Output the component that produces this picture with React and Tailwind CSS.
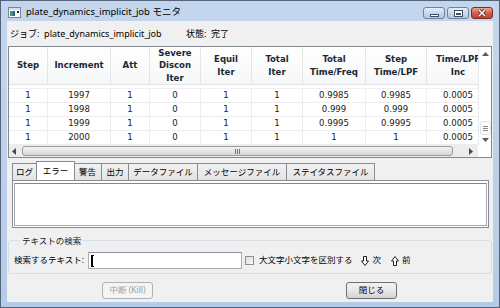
import React from "react";

const jp = "font-['Noto_Sans','Noto_Sans_CJK_JP',sans-serif]";
const tb = "font-['DejaVu_Sans_Condensed','Liberation_Sans',sans-serif]";

const cols = [
  { w: "w-[39px]", h: ["Step"], v: ["1", "1", "1", "1"] },
  { w: "w-[63px]", h: ["Increment"], v: ["1997", "1998", "1999", "2000"] },
  { w: "w-[39px]", h: ["Att"], v: ["1", "1", "1", "1"] },
  { w: "w-[51px]", h: ["Severe", "Discon", "Iter"], v: ["0", "0", "0", "0"] },
  { w: "w-[51px]", h: ["Equil", "Iter"], v: ["1", "1", "1", "1"] },
  { w: "w-[51px]", h: ["Total", "Iter"], v: ["1", "1", "1", "1"] },
  { w: "w-[63px]", h: ["Total", "Time/Freq"], v: ["0.9985", "0.999", "0.9995", "1"] },
  { w: "w-[61px]", h: ["Step", "Time/LPF"], v: ["0.9985", "0.999", "0.9995", "1"] },
  { w: "w-[63px]", h: ["Time/LPF", "Inc"], v: ["0.0005", "0.0005", "0.0005", "0.0005"] },
];

const tabs = [
  { t: "ログ", w: "w-[25px]" },
  { t: "エラー", w: "w-[39px]", sel: true },
  { t: "警告", w: "w-[28px]" },
  { t: "出力", w: "w-[27px]" },
  { t: "データファイル", w: "w-[69px]" },
  { t: "メッセージファイル", w: "w-[89px]" },
  { t: "ステイタスファイル", w: "w-[88px]" },
];

function TitleIcon() {
  return (
    <svg width="13" height="11" viewBox="0 0 13 11">
      <rect x="0.5" y="0.5" width="12" height="10" fill="#ffffff" stroke="#7b8797" />
      <rect x="1" y="1" width="11" height="2" fill="#d3deec" />
      <rect x="2" y="4" width="3" height="5" fill="#3c9c6e" />
      <rect x="5" y="4" width="2" height="5" fill="#2f5fa6" />
      <rect x="9" y="4" width="2" height="2" fill="#333" />
    </svg>
  );
}

function CapBtn({ children, red }) {
  return (
    <div
      className={
        red
          ? "w-[22px] h-[12px] rounded-[3px] border border-[#7b2c22] bg-gradient-to-b from-[#e9a596] via-[#d0614f] to-[#c4402f] flex items-center justify-center"
          : "w-[22px] h-[12px] rounded-[3px] border border-[#6f819b] bg-gradient-to-b from-[#e6eef8] via-[#c9d8ec] to-[#b3c7e2] flex items-center justify-center"
      }
    >
      {children}
    </div>
  );
}

export default function App() {
  return (
    <div className="w-[500px] h-[308px] bg-gradient-to-b from-[#c3d6ee] to-[#b5cce8] border border-[#52637a] flex flex-col px-[6px] pb-[5px] overflow-hidden">
      {/* title bar */}
      <div className="h-[20px] flex items-start shrink-0">
        <div className="mt-[6px] ml-[1px]">
          <TitleIcon />
        </div>
        <div className={`${jp} text-[9.5px] leading-[12px] text-black ml-[5px] mt-[5px]`}>
          plate_dynamics_implicit_job モニタ
        </div>
        <div className="ml-auto mt-[6px] mr-[0px] flex gap-[2px]">
          <CapBtn>
            <div className="w-[9px] h-[3px] bg-white border border-[#3d4d66] mt-[4px]" />
          </CapBtn>
          <CapBtn>
            <div className="w-[9px] h-[7px] border border-[#3d4d66] bg-white flex items-center justify-center">
              <div className="w-[5px] h-[2px] bg-[#3d4d66] mt-[1px]" />
            </div>
          </CapBtn>
          <CapBtn red>
            <svg width="10" height="8" viewBox="0 0 10 8">
              <path d="M2 1 L8 7 M8 1 L2 7" stroke="#5a1a12" strokeWidth="3" />
              <path d="M2 1 L8 7 M8 1 L2 7" stroke="#ffffff" strokeWidth="1.6" />
            </svg>
          </CapBtn>
        </div>
      </div>

      {/* client */}
      <div className="flex-1 bg-[#f0f0f0] flex flex-col">
        {/* job line */}
        <div className={`${jp} h-[25px] flex items-center pl-[3px] text-[9px] text-black shrink-0`}>
          <span className="w-[176px]">ジョブ:&nbsp; plate_dynamics_implicit_job</span>
          <span>状態:&nbsp; 完了</span>
        </div>

        {/* table */}
        <div className={`${tb} ml-[1px] w-[484px] h-[112px] border border-[#828790] bg-white flex flex-col shrink-0`}>
          <div className="flex h-[98px]">
            <div className="w-[469px] overflow-hidden flex flex-col">
              <div className="flex h-[38px] bg-gradient-to-b from-white to-[#f6f7f8] border-b border-[#e2e3e5] shrink-0">
                {cols.map((c, i) => (
                  <div
                    key={i}
                    className={`${c.w} shrink-0 flex flex-col items-center justify-center border-r border-[#e5e5e5] text-[9.5px] leading-[12.5px] font-bold text-[#1d2735]`}
                  >
                    {c.h.map((l, j) => (
                      <span key={j} className="whitespace-nowrap">{l}</span>
                    ))}
                  </div>
                ))}
              </div>
              <div className="h-[4px] border-b border-[#efefef] shrink-0" />
              {[0, 1, 2, 3].map((r) => (
                <div key={r} className="flex h-[14px] border-b border-[#ededed] shrink-0">
                  {cols.map((c, i) => (
                    <div
                      key={i}
                      className={`${c.w} shrink-0 flex items-center justify-center border-r border-[#ededed] text-[9.5px] text-[#202020]`}
                    >
                      {c.v[r]}
                    </div>
                  ))}
                </div>
              ))}
            </div>
            {/* vertical scrollbar */}
            <div className="w-[13px] border-l border-[#eaeaea] bg-white flex flex-col items-center text-[#5a5a5a]">
              <svg width="7" height="4" viewBox="0 0 7 4" className="mt-[5px]">
                <path d="M0 4 L3.5 0 L7 4 Z" fill="#5a5a5a" />
              </svg>
              <div className="flex-1" />
              <div className="w-[11px] h-[14px] rounded-[2px] border border-[#e3e3e3] bg-[#fbfbfb] flex flex-col items-center justify-center gap-[1px]">
                <div className="w-[5px] h-[1px] bg-[#8a8a8a]" />
                <div className="w-[5px] h-[1px] bg-[#8a8a8a]" />
                <div className="w-[5px] h-[1px] bg-[#8a8a8a]" />
              </div>
              <svg width="7" height="4" viewBox="0 0 7 4" className="mt-[3px] mb-[3px]">
                <path d="M0 0 L3.5 4 L7 0 Z" fill="#5a5a5a" />
              </svg>
            </div>
          </div>
          {/* horizontal scrollbar */}
          <div className="flex h-[12px]">
            <div className="w-[469px] bg-[#ececec] flex items-center px-[3px]">
              <svg width="4" height="7" viewBox="0 0 4 7">
                <path d="M4 0 L0 3.5 L4 7 Z" fill="#4a4a4a" />
              </svg>
              <div className="ml-[6px] w-[431px] h-[10px] rounded-[3px] border border-[#9b9b9b] bg-gradient-to-b from-[#f3f3f3] to-[#d6d6d6] flex items-center justify-center gap-[1px]">
                <div className="w-[1px] h-[5px] bg-[#777]" />
                <div className="w-[1px] h-[5px] bg-[#777]" />
                <div className="w-[1px] h-[5px] bg-[#777]" />
              </div>
              <div className="flex-1" />
              <svg width="4" height="7" viewBox="0 0 4 7" className="mr-[2px]">
                <path d="M0 0 L4 3.5 L0 7 Z" fill="#4a4a4a" />
              </svg>
            </div>
            <div className="flex-1 bg-white" />
          </div>
        </div>

        {/* tabs */}
        <div className={`${jp} ml-[5px] mt-[3px] h-[19px] flex items-end shrink-0 text-[8.5px]`}>
          {tabs.map((t, i) =>
            t.sel ? (
              <div
                key={i}
                className={`${t.w} h-[19px] -mx-[1px] relative z-10 bg-white border border-b-0 border-[#898c95] flex items-center justify-center text-black`}
              >
                {t.t}
              </div>
            ) : (
              <div
                key={i}
                className={`${t.w} h-[17px] bg-gradient-to-b from-[#f2f2f2] to-[#e3e3e3] border border-[#898c95] border-b-0 ${i > 0 ? "border-l-0" : ""} flex items-center justify-center text-black`}
              >
                {t.t}
              </div>
            )
          )}
        </div>
        <div className="ml-[5px] w-[477px] h-[48px] border border-[#898c95] bg-white p-[1px] pt-[2px] shrink-0 -mt-[0px]">
          <div className="w-full h-full border border-[#a3a6ad] border-t-[#82858c] bg-white" />
        </div>

        {/* search group */}
        <fieldset className={`${jp} ml-[1px] mt-[6px] w-[484px] border border-[#d5dfe5] rounded-[3px] pl-[5px] pt-[5px] pb-[4px] shrink-0`}>
          <legend className="ml-[6px] px-[2px] text-[8.5px] leading-[13px] text-[#1a1a1a]">テキストの検索</legend>
          <div className="flex items-center h-[17px] text-[8.5px] text-black">
            <span className="w-[74px]">検索するテキスト:</span>
            <div className="w-[154px] h-[17px] border border-[#abadb3] border-t-[#8e9198] bg-white flex items-center pl-[2px]">
              <div className="w-[3px] h-[12px] border-l-[2px] border-y border-black" />
            </div>
            <div className="ml-[3px] w-[9px] h-[9px] border border-[#8f8f8f] bg-gradient-to-br from-[#dcdcdc] to-[#fafafa]" />
            <span className="ml-[5px]">大文字小文字を区別する</span>
            <svg width="8" height="10" viewBox="0 0 8 10" className="ml-[8px]">
              <path d="M2.5 0.5 H5.5 V5 H7.5 L4 9.5 L0.5 5 H2.5 Z" fill="#ffffff" stroke="#202020" strokeWidth="1" />
            </svg>
            <span className="ml-[4px]">次</span>
            <svg width="8" height="10" viewBox="0 0 8 10" className="ml-[10px]">
              <path d="M2.5 9.5 H5.5 V5 H7.5 L4 0.5 L0.5 5 H2.5 Z" fill="#ffffff" stroke="#202020" strokeWidth="1" />
            </svg>
            <span className="ml-[3px]">前</span>
          </div>
        </fieldset>

        {/* buttons */}
        <div className={`${jp} flex mt-[8px] h-[17px] text-[8.5px] shrink-0`}>
          <div className="ml-[95px] w-[51px] h-[17px] rounded-[3px] border border-[#adb2b5] bg-[#f4f4f4] flex items-center justify-center text-[#a0a0a0]">
            中断 (Kill)
          </div>
          <div className="ml-[193px] w-[51px] h-[17px] rounded-[3px] border border-[#707070] bg-gradient-to-b from-[#f2f2f2] via-[#e8e8e8] to-[#d2d2d2] flex items-center justify-center text-black">
            閉じる
          </div>
        </div>
      </div>
    </div>
  );
}
